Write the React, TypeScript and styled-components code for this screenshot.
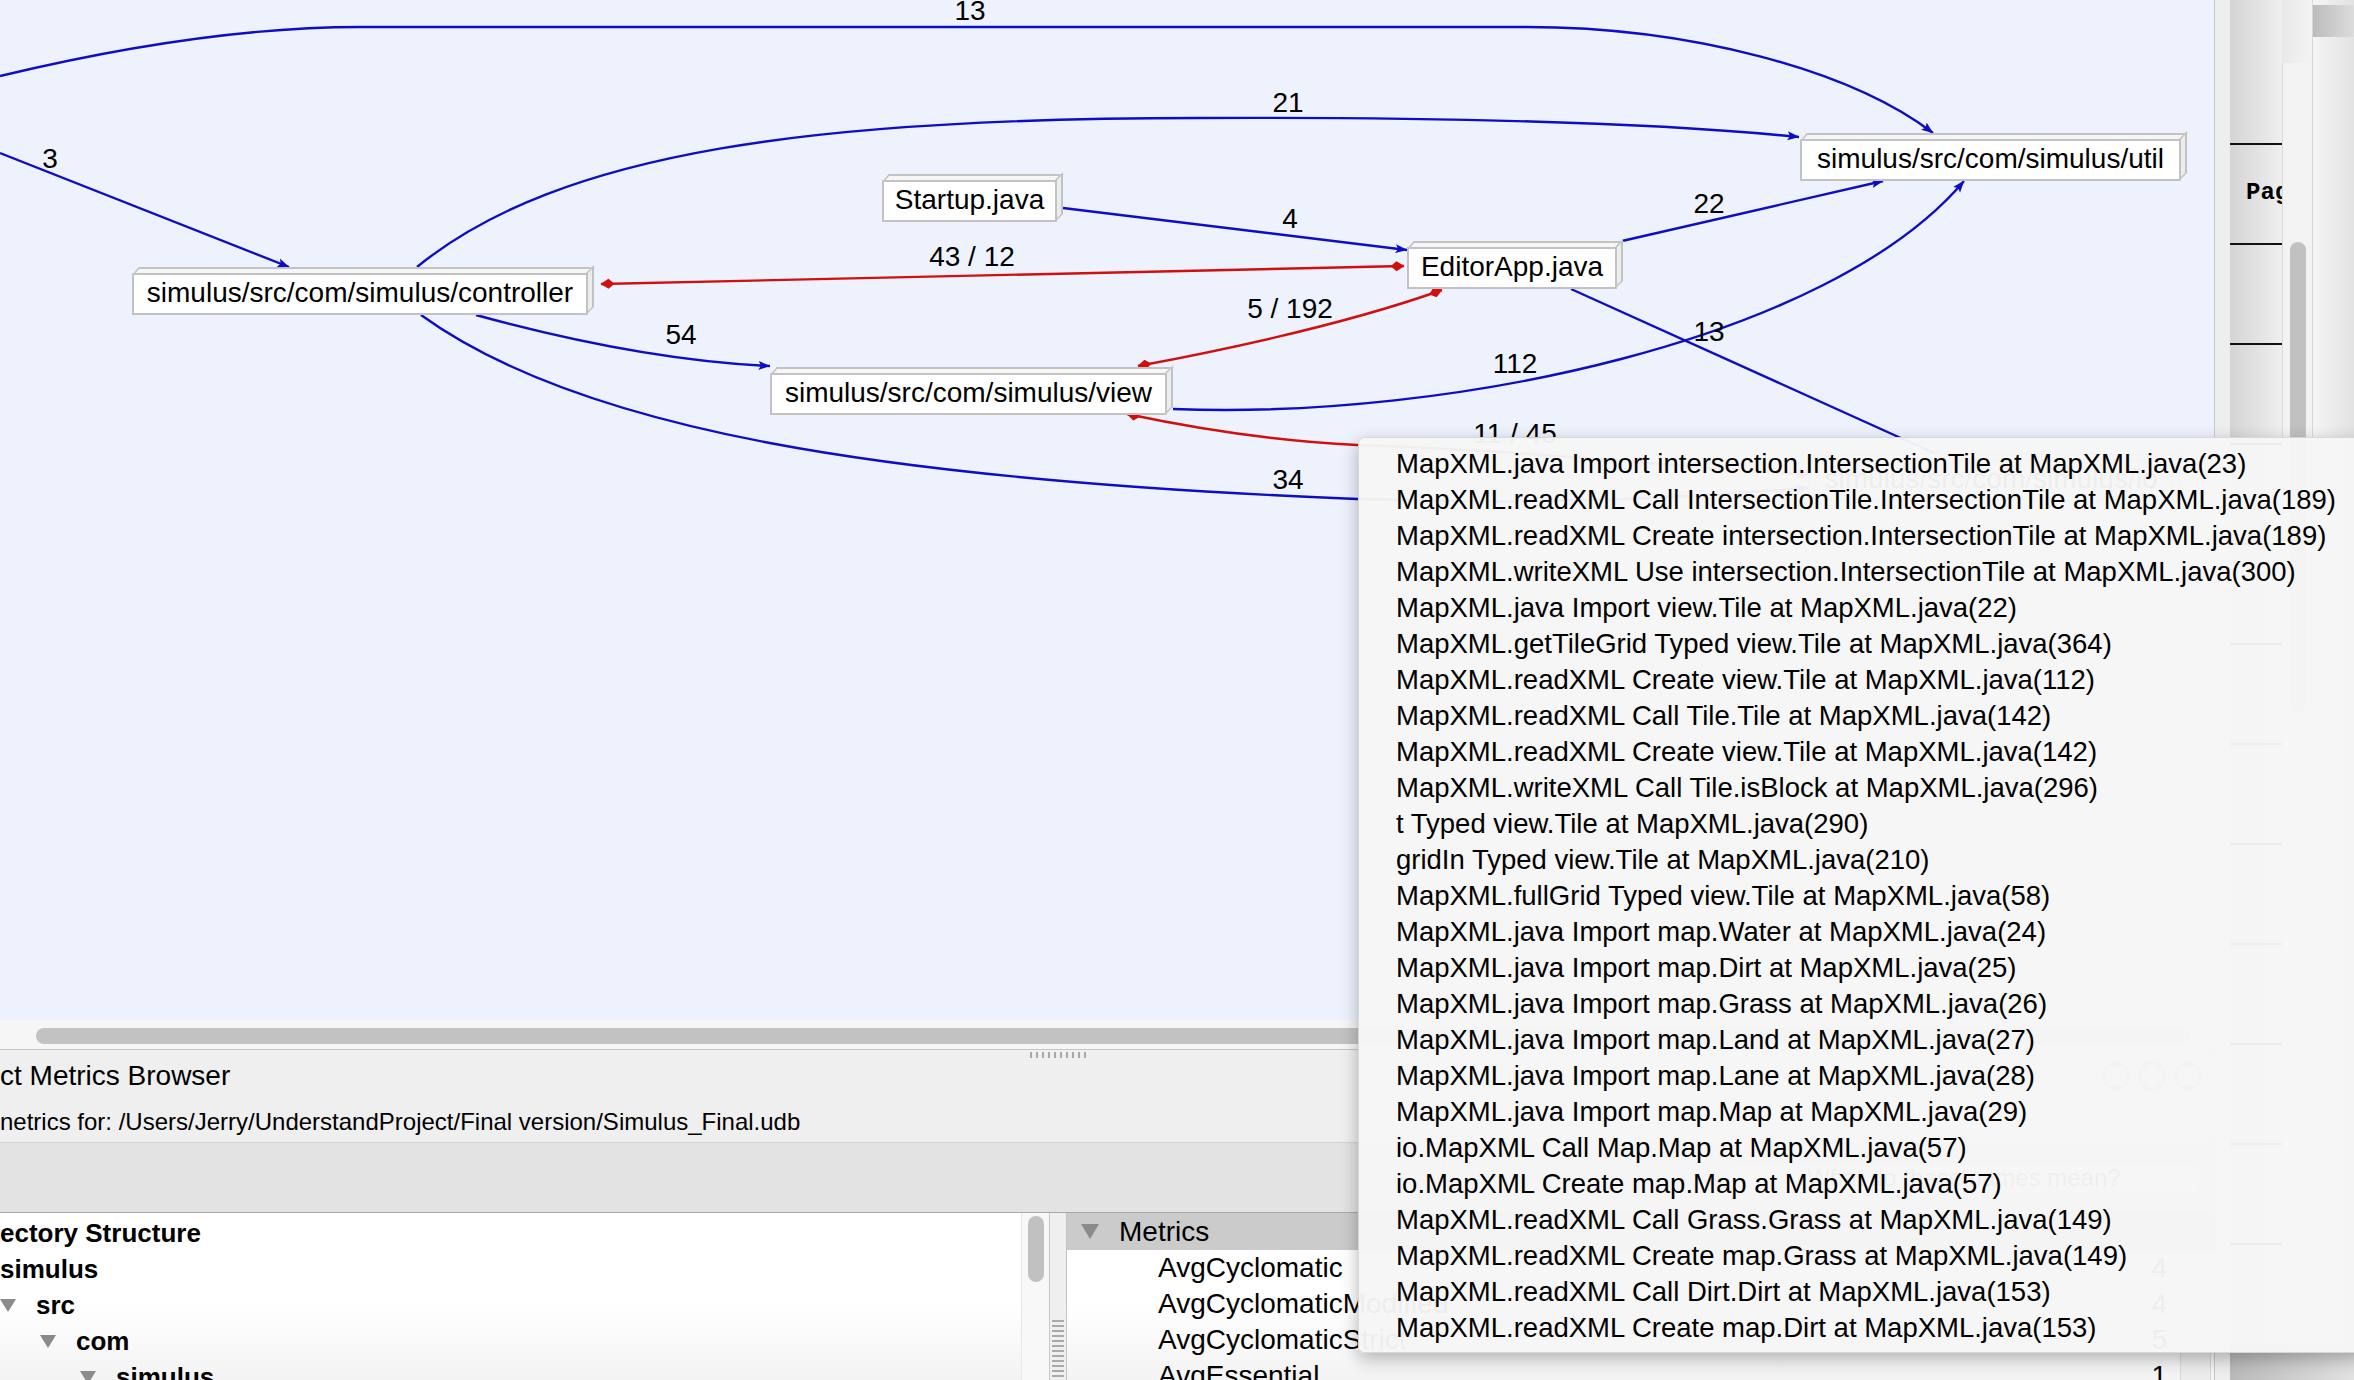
import React from "react";
import styled, { createGlobalStyle } from "styled-components";

const GlobalStyle = createGlobalStyle`
    html, body {
        margin: 0;
        padding: 0;
    }
    body {
        width: 2354px;
        height: 1380px;
        overflow: hidden;
        background: #e9e9e9;
        font-family: "Liberation Sans", Arial, Helvetica, sans-serif;
        color: #000;
    }
`

type Tone = "blue" | "red";

interface IEdge {
    d: string,
    tone: Tone,
    start?: boolean,
    end?: boolean
}

interface ILabel {
    text: string,
    x: number,
    y: number
}

interface INode {
    label: string,
    x: number,
    y: number,
    w: number
}

const edges: IEdge[] = [
    { d: "M0,76 C150,40 270,27 360,27 L1526,27 C1690,27 1850,70 1933,133", tone: "blue", end: true },
    { d: "M417,267 C560,150 820,118 1200,118 C1450,117 1650,122 1799,137", tone: "blue", end: true },
    { d: "M0,153 L289,267", tone: "blue", end: true },
    { d: "M1063,208 L1407,250", tone: "blue", end: true },
    { d: "M1622,241 L1883,181", tone: "blue", end: true },
    { d: "M601,284 L1404,266", tone: "red", start: true, end: true },
    { d: "M1138,366 Q1330,330 1442,290", tone: "red", start: true, end: true },
    { d: "M1571,289 L1945,458", tone: "blue", end: true },
    { d: "M1173,409 C1450,420 1830,340 1964,181", tone: "blue", end: true },
    { d: "M476,315 Q640,360 770,366", tone: "blue", end: true },
    { d: "M421,315 C580,430 880,480 1357,499 C1560,506 1700,496 1808,488", tone: "blue", end: true },
    { d: "M1127,414 Q1250,440 1357,445 C1560,452 1700,470 1808,474", tone: "red", start: true, end: true },
];

const labels: ILabel[] = [
    { text: "13", x: 970, y: 10 },
    { text: "3", x: 50, y: 158 },
    { text: "21", x: 1288, y: 102 },
    { text: "4", x: 1290, y: 218 },
    { text: "22", x: 1709, y: 203 },
    { text: "43 / 12", x: 972, y: 256 },
    { text: "5 / 192", x: 1290, y: 308 },
    { text: "13", x: 1709, y: 331 },
    { text: "54", x: 681, y: 334 },
    { text: "112", x: 1515, y: 363 },
    { text: "11 / 45", x: 1515, y: 433 },
    { text: "34", x: 1288, y: 479 },
];

const nodes: INode[] = [
    { label: "simulus/src/com/simulus/controller", x: 132, y: 273, w: 456 },
    { label: "Startup.java", x: 882, y: 180, w: 175 },
    { label: "simulus/src/com/simulus/view", x: 770, y: 373, w: 397 },
    { label: "EditorApp.java", x: 1407, y: 247, w: 210 },
    { label: "simulus/src/com/simulus/util", x: 1800, y: 139, w: 381 },
    { label: "simulus/src/com/simulus/io", x: 1808, y: 459, w: 366 },
];

const menuItems = [
    "MapXML.java Import intersection.IntersectionTile at MapXML.java(23)",
    "MapXML.readXML Call IntersectionTile.IntersectionTile at MapXML.java(189)",
    "MapXML.readXML Create intersection.IntersectionTile at MapXML.java(189)",
    "MapXML.writeXML Use intersection.IntersectionTile at MapXML.java(300)",
    "MapXML.java Import view.Tile at MapXML.java(22)",
    "MapXML.getTileGrid Typed view.Tile at MapXML.java(364)",
    "MapXML.readXML Create view.Tile at MapXML.java(112)",
    "MapXML.readXML Call Tile.Tile at MapXML.java(142)",
    "MapXML.readXML Create view.Tile at MapXML.java(142)",
    "MapXML.writeXML Call Tile.isBlock at MapXML.java(296)",
    "t Typed view.Tile at MapXML.java(290)",
    "gridIn Typed view.Tile at MapXML.java(210)",
    "MapXML.fullGrid Typed view.Tile at MapXML.java(58)",
    "MapXML.java Import map.Water at MapXML.java(24)",
    "MapXML.java Import map.Dirt at MapXML.java(25)",
    "MapXML.java Import map.Grass at MapXML.java(26)",
    "MapXML.java Import map.Land at MapXML.java(27)",
    "MapXML.java Import map.Lane at MapXML.java(28)",
    "MapXML.java Import map.Map at MapXML.java(29)",
    "io.MapXML Call Map.Map at MapXML.java(57)",
    "io.MapXML Create map.Map at MapXML.java(57)",
    "MapXML.readXML Call Grass.Grass at MapXML.java(149)",
    "MapXML.readXML Create map.Grass at MapXML.java(149)",
    "MapXML.readXML Call Dirt.Dirt at MapXML.java(153)",
    "MapXML.readXML Create map.Dirt at MapXML.java(153)",
];

const treeRows = [
    { label: "simulus", x: 0 },
    { label: "src", x: 36 },
    { label: "com", x: 76 },
    { label: "simulus", x: 116 },
];

const metricRows = [
    { name: "AvgCyclomatic", value: "4" },
    { name: "AvgCyclomaticModified", value: "4" },
    { name: "AvgCyclomaticStrict", value: "5" },
    { name: "AvgEssential", value: "1" },
];

const pageRows = ["Pag", "", "", "", "", "", "", "", "", "", "", ""];

const strokeOf = (tone: Tone) => tone === "blue" ? "#0d0dc6" : "#d0100f";

const App: React.FC = () => {
    return (
        <>
            <GlobalStyle />
            <Screen>
                <MainWindow>
                    <GraphPane>
                        <Canvas>
                            <EdgeLayer width={2214} height={1020} viewBox="0 0 2214 1020">
                                <defs>
                                    <marker id="arrow-blue" viewBox="0 0 12 10" refX="11.5" refY="5"
                                        markerWidth="12" markerHeight="10" markerUnits="userSpaceOnUse"
                                        orient="auto">
                                        <path d="M0,0.5 L12,5 L0,9.5 L2.5,5 z" fill="#0d0dc6" />
                                    </marker>
                                    <marker id="diamond-red" viewBox="0 0 14 11" refX="13.5" refY="5.5"
                                        markerWidth="14" markerHeight="11" markerUnits="userSpaceOnUse"
                                        orient="auto-start-reverse">
                                        <path d="M0,5.5 L6,0.5 L14,5.5 L6,10.5 z" fill="#d0100f" />
                                    </marker>
                                </defs>
                                {edges.map((e, i) => (
                                    <path
                                        key={i}
                                        d={e.d}
                                        fill="none"
                                        stroke={strokeOf(e.tone)}
                                        strokeWidth={2.4}
                                        markerStart={e.start ? "url(#diamond-red)" : undefined}
                                        markerEnd={e.end ? (e.tone === "blue" ? "url(#arrow-blue)" : "url(#diamond-red)") : undefined}
                                    />
                                ))}
                                {labels.map((l, i) => (
                                    <EdgeLabel key={i} x={l.x} y={l.y} textAnchor="middle" dominantBaseline="central">
                                        {l.text}
                                    </EdgeLabel>
                                ))}
                            </EdgeLayer>
                            {nodes.map((n, i) => (
                                <Node key={i} $x={n.x} $y={n.y} $w={n.w}>{n.label}</Node>
                            ))}
                        </Canvas>
                        <HScroll>
                            <HThumb />
                        </HScroll>
                    </GraphPane>

                    <Browser>
                        <BrowserHeader>
                            <Grip />
                            <TitleRow>
                                <Title>ct Metrics Browser</Title>
                                <HeaderIcons>
                                    <RoundIcon />
                                    <RoundIcon />
                                    <RoundIcon />
                                </HeaderIcons>
                            </TitleRow>
                            <PathLine>netrics for: /Users/Jerry/UnderstandProject/Final version/Simulus_Final.udb</PathLine>
                        </BrowserHeader>
                        <Toolbar>
                            <HelpButton>What do these names mean?</HelpButton>
                        </Toolbar>
                        <BrowserBody>
                            <TreePane>
                                <TreeList>
                                    <TreeRow $x={0}><TreeText>ectory Structure</TreeText></TreeRow>
                                    {treeRows.map((r, i) => (
                                        <TreeRow key={i} $x={r.x - 36}>
                                            <Toggle />
                                            <TreeText>{r.label}</TreeText>
                                        </TreeRow>
                                    ))}
                                </TreeList>
                                <VScroll>
                                    <VThumb $top={3} $height={66} />
                                </VScroll>
                            </TreePane>
                            <Splitter>
                                <SplitGrip />
                            </Splitter>
                            <MetricsPane>
                                <MetricsHeader>
                                    <Toggle $large />
                                    <MetricsTitle>Metrics</MetricsTitle>
                                </MetricsHeader>
                                {metricRows.map((m, i) => (
                                    <MetricRow key={i}>
                                        <MetricName>{m.name}</MetricName>
                                        <MetricValue>{m.value}</MetricValue>
                                        <MetricSpare />
                                    </MetricRow>
                                ))}
                            </MetricsPane>
                        </BrowserBody>
                    </Browser>
                </MainWindow>

                <WindowEdge />

                <SideWindow>
                    <SideBody>
                        <PageColumn>
                            {pageRows.map((t, i) => (
                                <PageRow key={i}>{t}</PageRow>
                            ))}
                        </PageColumn>
                        <SideScroll>
                            <VThumb $top={179} $height={470} />
                        </SideScroll>
                        <EdgeColumn>
                            <EdgeBar />
                        </EdgeColumn>
                    </SideBody>
                    <SideFooter />
                </SideWindow>

                <Menu>
                    {menuItems.map((t, i) => (
                        <MenuItem key={i}>{t}</MenuItem>
                    ))}
                </Menu>
            </Screen>
        </>
    )
}

const Screen = styled.div`
    position: relative;
    display: flex;
    width: 2354px;
    height: 1380px;
    overflow: hidden;
`

const MainWindow = styled.div`
    display: flex;
    flex-direction: column;
    width: 2214px;
    height: 100%;
    flex-shrink: 0;
`

const GraphPane = styled.div`
    display: flex;
    flex-direction: column;
    flex-shrink: 0;
`

const Canvas = styled.div`
    position: relative;
    height: 1020px;
    background: #edf2fd;
    overflow: hidden;
`

const EdgeLayer = styled.svg`
    position: absolute;
    left: 0;
    top: 0;
`

const EdgeLabel = styled.text`
    font-family: "Liberation Sans", Arial, sans-serif;
    font-size: 28px;
    fill: #000;
`

const Node = styled.div<{ $x: number, $y: number, $w: number }>`
    position: absolute;
    left: ${p => p.$x}px;
    top: ${p => p.$y}px;
    width: ${p => p.$w}px;
    height: 42px;
    box-sizing: border-box;
    border: 2px solid #c2c2c2;
    background: #fff;
    font-size: 28px;
    line-height: 35px;
    text-align: center;
    white-space: nowrap;

    &::before {
        content: "";
        position: absolute;
        box-sizing: border-box;
        left: -2px;
        top: -8px;
        width: calc(100% + 4px);
        height: 8px;
        border: 2px solid #c2c2c2;
        background: #f6f6f6;
        transform: skewX(-40deg);
        transform-origin: left bottom;
    }

    &::after {
        content: "";
        position: absolute;
        box-sizing: border-box;
        left: 100%;
        top: -2px;
        width: 8px;
        height: calc(100% + 4px);
        border: 2px solid #c2c2c2;
        background: #ececec;
        transform: skewY(-45deg);
        transform-origin: left top;
    }
`

const HScroll = styled.div`
    display: flex;
    height: 30px;
    box-sizing: border-box;
    padding: 8px 24px 6px 36px;
    background: #f6f6f6;
    border-bottom: 1px solid #c6c6c6;
`

const HThumb = styled.div`
    flex: 1;
    height: 16px;
    border-radius: 8px;
    background: #c2c2c2;
`

const Browser = styled.div`
    display: flex;
    flex-direction: column;
    flex: 1;
    min-height: 0;
`

const BrowserHeader = styled.div`
    display: flex;
    flex-direction: column;
    height: 93px;
    box-sizing: border-box;
    background: #efefef;
    border-bottom: 1px solid #d4d4d4;
    flex-shrink: 0;
`

const Grip = styled.div`
    margin: 2px 0 0 1030px;
    width: 56px;
    height: 6px;
    background: repeating-linear-gradient(90deg, #a8a8a8 0 2px, transparent 2px 6px);
`

const TitleRow = styled.div`
    display: flex;
    align-items: center;
    height: 36px;
`

const Title = styled.div`
    font-size: 28px;
    line-height: 36px;
    white-space: nowrap;
`

const HeaderIcons = styled.div`
    display: flex;
    gap: 8px;
    margin-left: auto;
    margin-right: 12px;
`

const RoundIcon = styled.div`
    width: 22px;
    height: 22px;
    border-radius: 50%;
    border: 3px solid #9c9c9c;
`

const PathLine = styled.div`
    margin-top: 13px;
    font-size: 24px;
    line-height: 30px;
    white-space: nowrap;
`

const Toolbar = styled.div`
    display: flex;
    align-items: center;
    height: 70px;
    box-sizing: border-box;
    background: #e3e3e3;
    border-bottom: 1px solid #a9a9a9;
    flex-shrink: 0;
`

const HelpButton = styled.div`
    margin-left: auto;
    margin-right: 14px;
    width: 472px;
    height: 30px;
    box-sizing: border-box;
    border: 1px solid #b4b4b4;
    border-radius: 6px;
    background: #f8f8f8;
    font-size: 24px;
    line-height: 28px;
    text-align: center;
    color: #333;
`

const BrowserBody = styled.div`
    display: flex;
    flex: 1;
    min-height: 0;
    overflow: hidden;
`

const TreePane = styled.div`
    display: flex;
    width: 1050px;
    flex-shrink: 0;
    background: linear-gradient(180deg, #ffffff 0%, #ffffff 55%, #f3f3f3 100%);
`

const TreeList = styled.div`
    flex: 1;
    padding-top: 2px;
    overflow: hidden;
`

const TreeRow = styled.div<{ $x: number }>`
    display: flex;
    align-items: center;
    height: 36px;
    margin-left: ${p => p.$x}px;
`

const Toggle = styled.div<{ $large?: boolean }>`
    flex-shrink: 0;
    width: 0;
    height: 0;
    border-left: ${p => p.$large ? 9 : 8}px solid transparent;
    border-right: ${p => p.$large ? 9 : 8}px solid transparent;
    border-top: ${p => p.$large ? 15 : 13}px solid #8b8b8b;
    margin-right: 20px;
`

const TreeText = styled.span`
    font-size: 26px;
    font-weight: bold;
    white-space: nowrap;
`

const VScroll = styled.div`
    width: 29px;
    box-sizing: border-box;
    background: #f8f8f8;
    border-left: 1px solid #e8e8e8;
    border-right: 1px solid #c8c8c8;
    padding-left: 6px;
`

const SideScroll = styled.div`
    width: 30px;
    box-sizing: border-box;
    margin-top: 63px;
    background: #f3f3f3;
    border-left: 1px solid #dadada;
    padding-left: 7px;
`

const VThumb = styled.div<{ $top: number, $height: number }>`
    margin-top: ${p => p.$top}px;
    width: 16px;
    height: ${p => p.$height}px;
    border-radius: 8px;
    background: #c1c1c1;
`

const Splitter = styled.div`
    display: flex;
    flex-direction: column;
    justify-content: flex-end;
    width: 16px;
    flex-shrink: 0;
    background: #efefef;
`

const SplitGrip = styled.div`
    margin: 0 2px;
    height: 60px;
    background: repeating-linear-gradient(180deg, #a9a9a9 0 2px, transparent 2px 5px);
`

const MetricsPane = styled.div`
    flex: 1;
    display: flex;
    flex-direction: column;
    border-left: 1px solid #c4c4c4;
    background: linear-gradient(180deg, #ffffff 0%, #ffffff 55%, #f3f3f3 100%);
    overflow: hidden;
`

const MetricsHeader = styled.div`
    display: flex;
    align-items: center;
    height: 37px;
    padding-left: 14px;
    background: #cbcbcb;
    flex-shrink: 0;
`

const MetricsTitle = styled.span`
    font-size: 28px;
`

const MetricRow = styled.div`
    display: grid;
    grid-template-columns: 1fr 50px 30px 3px;
    height: 36px;
    align-items: center;
    flex-shrink: 0;
`

const MetricName = styled.span`
    padding-left: 91px;
    font-size: 28px;
    white-space: nowrap;
`

const MetricValue = styled.span`
    height: 100%;
    box-sizing: border-box;
    padding-right: 13px;
    border-right: 1px solid #d8d8d8;
    font-size: 28px;
    line-height: 36px;
    text-align: right;
`

const MetricSpare = styled.span`
    height: 100%;
    border-right: 1px solid #d8d8d8;
    background: #ececec;
`

const WindowEdge = styled.div`
    width: 16px;
    flex-shrink: 0;
    box-sizing: border-box;
    background: #eeeeee;
    border-left: 1px solid #c9c9c9;
`

const SideWindow = styled.div`
    display: flex;
    flex-direction: column;
    flex: 1;
`

const SideBody = styled.div`
    display: flex;
    flex: 1;
    background: linear-gradient(90deg, #d2d2d2 0px, #f0f0f0 70px, #f2f2f2 82px);
`

const PageColumn = styled.div`
    display: flex;
    flex-direction: column;
    width: 52px;
    padding-top: 143px;
    background: linear-gradient(90deg, #d4d4d4, #efefef);
    overflow: hidden;
`

const PageRow = styled.div`
    height: 100px;
    flex-shrink: 0;
    box-sizing: border-box;
    border-top: 2px solid #111;
    padding-left: 16px;
    font-family: "Liberation Mono", "Courier New", monospace;
    font-weight: bold;
    font-size: 24px;
    line-height: 96px;
    white-space: nowrap;
`

const EdgeColumn = styled.div`
    width: 42px;
    box-sizing: border-box;
    border-left: 1px solid #d6d6d6;
    padding-top: 5px;
    background: linear-gradient(90deg, #f5f5f5, #e2e2e2);
`

const EdgeBar = styled.div`
    height: 32px;
    background: linear-gradient(90deg, #bcbcbc, #dcdcdc);
`

const SideFooter = styled.div`
    height: 40px;
    background: linear-gradient(90deg, #b9b9b9, #e2e2e2);
`

const Menu = styled.div`
    position: absolute;
    left: 1358px;
    top: 437px;
    width: 1010px;
    height: 916px;
    box-sizing: border-box;
    padding: 8px 0 8px 37px;
    background: rgba(246, 246, 246, 0.965);
    border: 1px solid rgba(0, 0, 0, 0.12);
    border-radius: 6px 0 0 6px;
    box-shadow: 0 6px 18px rgba(0, 0, 0, 0.28);
    z-index: 10;
`

const MenuItem = styled.div`
    height: 36px;
    font-size: 27.5px;
    line-height: 36px;
    white-space: nowrap;
    color: #000;
`

export default App;
